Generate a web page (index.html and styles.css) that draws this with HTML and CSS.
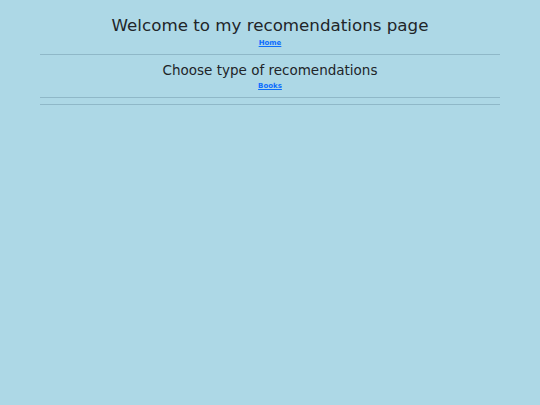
FILE: index.html
```html
<!DOCTYPE html>
<html>
<head>
<meta charset="utf-8">
<link rel="stylesheet" href="styles.css">
</head>
<body>
<div class="page">
  <header class="head">
    <h1 class="title">Welcome to my recomendations page</h1>
    <a class="link" href="#">Home</a>
  </header>
  <hr class="rule">
  <section class="choose">
    <h2 class="subtitle">Choose type of recomendations</h2>
    <a class="link" href="#">Books</a>
  </section>
  <hr class="rule">
  <hr class="rule">
</div>
</body>
</html>
```
FILE: styles.css
```css
html, body {
  margin: 0;
  padding: 0;
  background: #add8e6;
  font-family: "DejaVu Sans", Verdana, sans-serif;
  color: #212529;
}
.page {
  width: 460px;
  margin: 0 auto;
  display: flex;
  flex-direction: column;
  align-items: stretch;
}
.head, .choose {
  display: flex;
  flex-direction: column;
  align-items: center;
}
.head { padding-top: 14px; }
.choose { padding-top: 7px; }
.title {
  margin: 0;
  font-size: 16.7px;
  font-weight: 400;
  line-height: 22px;
}
.subtitle {
  margin: 0;
  font-size: 13.5px;
  font-weight: 400;
  line-height: 17px;
}
.link {
  margin-top: 3px;
  font-size: 7px;
  font-weight: 700;
  line-height: 9px;
  color: #0d6efd;
  text-decoration: underline;
}
.rule {
  margin: 6px 0 0;
  border: 0;
  border-top: 1px solid #8fb8c8;
  height: 0;
}
```
